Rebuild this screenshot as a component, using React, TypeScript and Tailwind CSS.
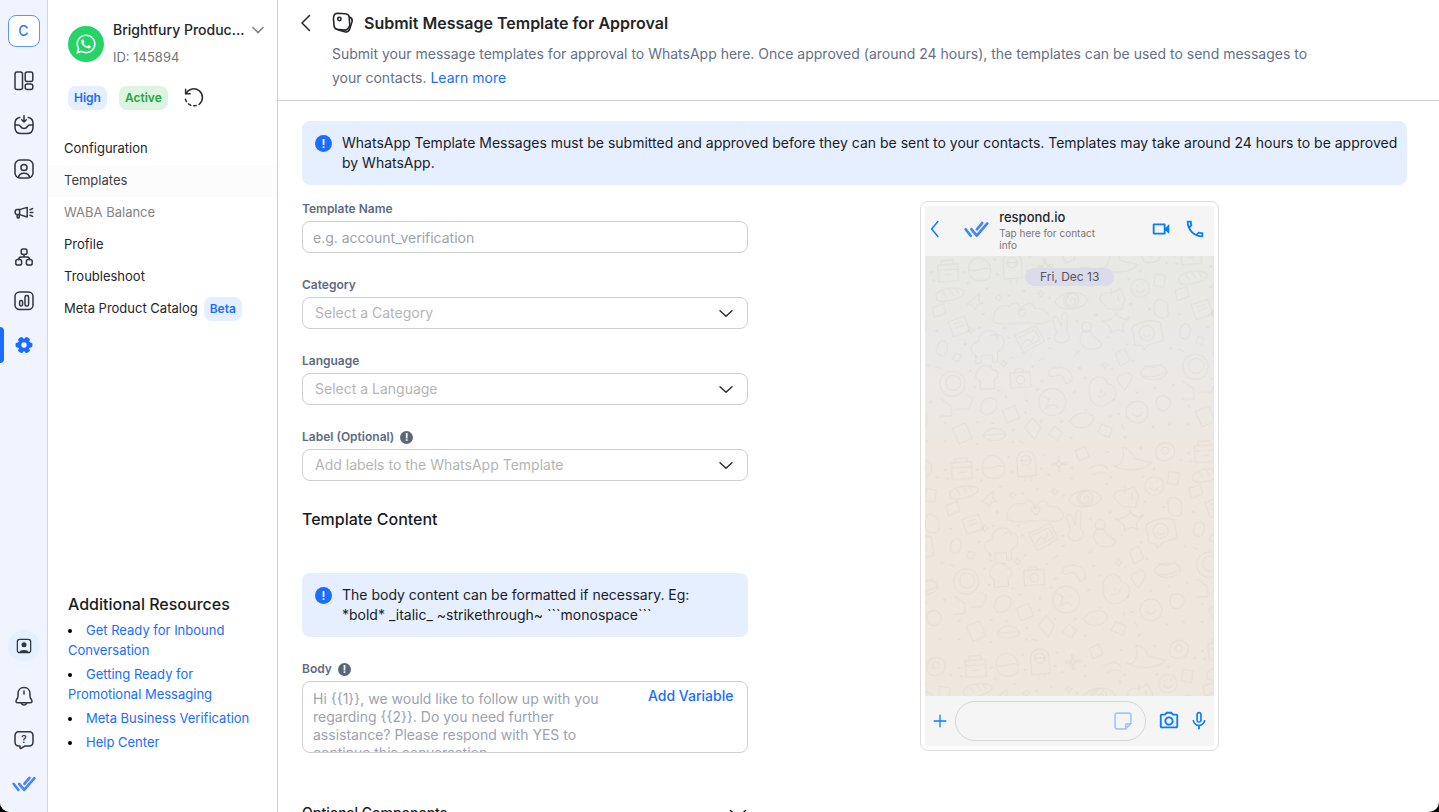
import { useState, type ReactNode } from 'react';
import { FaWhatsapp } from 'react-icons/fa';
import { MdOutlinePhone, MdOutlineVideocam, MdOutlinePhotoCamera, MdMicNone } from 'react-icons/md';

const menuItems = ['Configuration', 'Templates', 'WABA Balance', 'Profile', 'Troubleshoot', 'Meta Product Catalog'];

const resources = [
  'Get Ready for Inbound Conversation',
  'Getting Ready for Promotional Messaging',
  'Meta Business Verification',
  'Help Center',
];

function Icon({ children, className = 'size-6' }: { children: ReactNode; className?: string }) {
  return (
    <svg viewBox="0 0 24 24" className={className} fill="none" stroke="currentColor" strokeWidth="1.5" strokeLinecap="round" strokeLinejoin="round" aria-hidden="true">
      {children}
    </svg>
  );
}

function Logo({ className }: { className: string }) {
  return (
    <svg viewBox="0 0 24 16" className={className} fill="none" stroke="#4285ff" strokeWidth="2.6" strokeLinecap="round" strokeLinejoin="round" aria-hidden="true">
      <path d="M1.6 7.8 6.4 14" />
      <path d="M7.2 7.8 12.2 13.8 22.4 2.2" />
      <path d="M17.4 1.8 12.4 7.8" />
    </svg>
  );
}

const navIcons = [
  {
    label: 'Dashboard',
    icon: (
      <>
        <rect x="3" y="3" width="7.5" height="17.5" rx="2" />
        <rect x="13.2" y="3" width="7.6" height="9.4" rx="2" />
        <rect x="13.2" y="15" width="7.6" height="5.5" rx="2" />
      </>
    ),
  },
  {
    label: 'Inbox',
    icon: (
      <>
        <path d="M12 2.8v6M9.7 6.8 12 9l2.3-2.2" />
        <path d="M7.8 4.4C4.4 5 3 6.8 3 10.2v4C3 19 5 20.6 9.4 20.6h5.2c4.4 0 6.4-1.6 6.4-6.4v-4c0-3.4-1.4-5.2-4.8-5.8" />
        <path d="M3.2 12h3.2c2.6 0 1.6 3.6 5.6 3.6s3-3.6 5.6-3.6h3.2" />
      </>
    ),
  },
  {
    label: 'Contacts',
    icon: (
      <>
        <rect x="3" y="3" width="18" height="18" rx="5" />
        <circle cx="12" cy="10.5" r="3.1" />
        <path d="M6.4 20.4c.4-2.7 2.6-4.2 5.6-4.2s5.2 1.5 5.6 4.2" />
      </>
    ),
  },
  {
    label: 'Broadcasts',
    icon: (
      <>
        <path d="M7.6 8.6H5A1.8 1.8 0 0 0 3.2 10.4v1.4A1.8 1.8 0 0 0 5 13.6h2.6z" />
        <path d="M7.6 8.6 15.2 6.4V16l-7.6-2.4" />
        <path d="M5.2 13.8v2.4c0 1.2 2 1.2 2 0v-2.4" />
        <path d="M18 8.8 20.6 7.6M18.2 11.6h2.6M18 14.2l2.6 1.2" />
      </>
    ),
  },
  {
    label: 'Workflows',
    icon: (
      <>
        <rect x="9.2" y="4" width="5.8" height="5.4" rx="1.8" />
        <rect x="3.8" y="14.6" width="5.8" height="5.4" rx="1.8" />
        <rect x="14.4" y="14.6" width="5.8" height="5.4" rx="1.8" />
        <path d="M12 9.4V12M6.8 14.4c0-1.6.6-2.4 2-2.4h6.6c1.4 0 2 .8 2 2.4" />
      </>
    ),
  },
  {
    label: 'Reports',
    icon: (
      <>
        <rect x="3" y="3" width="18" height="17.5" rx="4.5" />
        <rect x="7.6" y="11.6" width="3" height="5.4" rx="1.4" />
        <rect x="13" y="6.6" width="3.6" height="10.4" rx="1.6" />
      </>
    ),
  },
];

function SettingsIcon() {
  return (
    <svg viewBox="0 0 24 24" className="size-6" aria-hidden="true">
      <g fill="#1a6dff">
        <circle cx="12" cy="12" r="6.4" />
        {[0, 60, 120, 180, 240, 300].map((angle) => (
          <rect key={angle} x="15" y="9.4" width="5.4" height="5.2" rx="1.6" transform={`rotate(${angle} 12 12)`} />
        ))}
      </g>
      <circle cx="12" cy="12" r="2.7" fill="#f0f4ff" />
    </svg>
  );
}

function NavRail() {
  return (
    <nav aria-label="Main" className="flex w-12 shrink-0 flex-col items-center border-r border-[#c2d7ff] bg-[#f0f4ff] pt-[15px] pb-4 text-[#31353d]">
      <button className="mb-4 size-8 rounded-lg border border-[#5b95ff] bg-white text-sm font-medium text-[#2f79ff]">C</button>
      <div className="flex w-full flex-col gap-2">
        {navIcons.map((item) => (
          <button key={item.label} aria-label={item.label} className="flex h-9 items-center justify-center">
            <Icon>{item.icon}</Icon>
          </button>
        ))}
        <button aria-label="Settings" className="relative flex h-9 items-center justify-center">
          <span className="absolute inset-y-0 left-0 w-1 rounded-r bg-[#1a6dff]" />
          <SettingsIcon />
        </button>
      </div>
      <div className="mt-auto flex flex-col items-center gap-5">
        <button aria-label="Account" className="mb-0.5 flex size-8 items-center justify-center rounded-full bg-[#e4efff]">
          <Icon className="size-5">
            <rect x="4" y="4" width="16" height="16" rx="3" />
            <circle cx="12" cy="10.5" r="3" fill="currentColor" stroke="none" />
            <path d="M6.5 19.5c0-3.5 11-3.5 11 0z" fill="currentColor" stroke="none" />
          </Icon>
        </button>
        <button aria-label="Notifications">
          <Icon>
            <path d="M12 3.6c-3.6 0-6 2.6-6 6.2v2.6c0 1.8-2 3-2 5 0 1 .8 1.4 1.8 1.4h12.4c1 0 1.8-.4 1.8-1.4 0-2-2-3.2-2-5V9.8c0-3.6-2.4-6.2-6-6.2z" />
            <path d="M9.4 19.2c.8 2.4 4.4 2.4 5.2 0M12 7v3" />
          </Icon>
        </button>
        <button aria-label="Help">
          <svg viewBox="0 0 24 24" className="size-6" fill="none" stroke="currentColor" strokeWidth="1.5" strokeLinejoin="round" aria-hidden="true">
            <path d="M7 3.8h10c3 0 4 1.6 4 4.2v6c0 2.6-1 4-4 4h-4l-4 2.4c-.6.4-1 0-1-.6V18H7c-3 0-4-1.4-4-4V8c0-2.6 1-4.2 4-4.2z" />
            <text x="12" y="14.5" textAnchor="middle" fontSize="10" fontWeight="600" fill="currentColor" stroke="none">?</text>
          </svg>
        </button>
        <a href="#home" aria-label="Home" className="flex h-6 items-center">
          <Logo className="h-4 w-6" />
        </a>
      </div>
    </nav>
  );
}

function Sidebar() {
  return (
    <aside className="flex w-[230px] shrink-0 flex-col border-r border-[#cfcfcf] bg-white pb-[60px]">
      <div className="flex items-center pt-[18px] pr-3 pl-5">
        <span className="flex size-9 shrink-0 items-center justify-center rounded-full bg-[#25d366] text-white">
          <FaWhatsapp className="size-[22px]" />
        </span>
        <div className="ml-[9px] min-w-0 flex-1">
          <button className="flex w-full items-center justify-between text-sm leading-6 font-medium whitespace-nowrap text-[#232629]">
            Brightfury Produc...
            <Icon className="size-3.5 shrink-0 text-[#8a8a8a]">
              <path d="m3.5 8 8.5 8.5L20.5 8" strokeWidth="2.8" />
            </Icon>
          </button>
          <p className="mt-[3px] text-[13px] leading-6 text-[#757575]">ID: 145894</p>
        </div>
      </div>

      <div className="mt-[17px] flex items-center pl-5 text-xs leading-6 font-semibold">
        <span className="rounded-lg bg-[#e5efff] px-1.5 text-[#1a6dff]">High</span>
        <span className="ml-3 rounded-lg bg-[#dcf5e0] px-1.5 text-[#27a343]">Active</span>
        <button aria-label="Refresh status" className="ml-3.5 text-[#2c2f36]">
          <Icon>
            <path d="M3.6 3.2v4.600h4.600" />
            <path d="M4 7.600A8.700 8.700 0 1 1 17 18.500" />
            <path d="M14.200 19.500a8.700 8.700 0 0 1-11-8.500" strokeDasharray="2.600 2.900" />
          </Icon>
        </button>
      </div>

      <ul className="mt-[23px] text-[13px] text-[#232629]">
        {menuItems.map((item) => (
          <li key={item}>
            <a
              href="#"
              className={`flex h-8 items-center gap-1.5 pl-4 ${item === 'Templates' ? 'bg-[#fcfcfc] text-[#3c3f42]' : ''} ${item === 'WABA Balance' ? 'text-[#838383]' : ''}`}
            >
              {item}
              {item === 'Meta Product Catalog' && (
                <span className="rounded-lg bg-[#e5efff] px-1.5 text-xs leading-6 font-semibold text-[#1a6dff]">Beta</span>
              )}
            </a>
          </li>
        ))}
      </ul>

      <div className="mt-auto pr-6 pl-5">
        <h2 className="mb-1 text-base leading-6 font-medium text-[#191c1f]">Additional Resources</h2>
        <ul className="flex list-inside list-disc flex-col gap-1 text-[13px] leading-5 text-black">
          {resources.map((item) => (
            <li key={item}>
              <a href="#" className="text-[#1a6dff]">{item}</a>
            </li>
          ))}
        </ul>
      </div>
    </aside>
  );
}

function Alert({ children }: { children: ReactNode }) {
  return (
    <div className="flex gap-2.5 rounded-lg bg-[#e5efff] py-3 pr-1 pl-[13px] text-sm text-[#191c1f]">
      <span className="mt-0.5 flex size-[17px] shrink-0 items-center justify-center rounded-full bg-[#1a6dff] text-xs font-semibold text-white">!</span>
      <p>{children}</p>
    </div>
  );
}

function Label({ id, children, info }: { id: string; children: string; info?: boolean }) {
  return (
    <div className="mb-1 flex h-4 items-center gap-1.5">
      <label htmlFor={id} className="text-xs font-semibold text-[#5d6b82]">{children}</label>
      {info && (
        <span className="flex size-[13px] items-center justify-center rounded-full bg-[#5b6678] text-[10px] font-bold text-white">!</span>
      )}
    </div>
  );
}

function SelectField({ id, label, placeholder, options, info }: { id: string; label: string; placeholder: string; options: string[]; info?: boolean }) {
  const [value, setValue] = useState('');

  return (
    <div className="mb-6">
      <Label id={id} info={info}>{label}</Label>
      <div className="relative">
        <select
          id={id}
          value={value}
          onChange={(e) => setValue(e.target.value)}
          className={`h-8 w-full appearance-none rounded-lg border border-[#cfcfcf] bg-white pr-10 pl-3 text-sm ${value ? 'text-[#191c1f]' : 'text-[#b5b5b5]'}`}
        >
          <option value="" disabled>{placeholder}</option>
          {options.map((option) => (
            <option key={option}>{option}</option>
          ))}
        </select>
        <Icon className="pointer-events-none absolute top-2 right-3.5 size-4 text-[#232629]">
          <path d="m3 8.5 9 8.5 9-8.500" strokeWidth="2" />
        </Icon>
      </div>
    </div>
  );
}

function Doodles() {
  return (
    <svg className="absolute inset-0 size-full" fill="none" stroke="#8b8b7c" strokeOpacity="0.1" strokeWidth="1.3" strokeLinecap="round" strokeLinejoin="round" aria-hidden="true">
      <defs>
        <pattern id="doodles" width="290" height="236" patternUnits="userSpaceOnUse" patternTransform="rotate(-4) scale(0.84)">
          <path d="M14 12h24v20H14zM14 18h24M19 12V7h14v5M22 24h8" />
          <path d="M54 10c12-9 26 2 22 18-2 8-20 8-24 0-2-6-2-14 2-18zM52 20c8 5 16-4 25 1" />
          <path d="M92 34V14c0-13 22-13 22 0v20zM98 15h11M100 34v6M107 34v6" />
          <circle cx="103" cy="15" r="6" />
          <circle cx="142" cy="22" r="3" />
          <path d="M142 19c-5-8 5-8 0 0M145 22c8-5 8 5 0 0M142 25c5 8-5 8 0 0M139 22c-8 5-8-5 0 0" />
          <path d="M162 8l12-5 4 13-12 4zM178 30c8-6 18-4 21 2M181 38c5-3 11-3 17-1" />
          <path d="M206 28c8 6 16-10 12-20 8 0 12 7 14 14l20 6c-8 9-34 10-46 0z" />
          <path d="M262 8c8-6 20 0 18 10s-18 12-22 3c-1-5 0-9 4-13z" />
          <circle cx="269" cy="15" r="4" />
          <path d="M10 46c10-8 28-7 34-1 0 8-26 14-34 8zM18 44l4 7M26 42l4 7M34 42l3 6" />
          <path d="M55 54l7-5-2 8 5 4-7 1-3 6-3-6-6-1 5-4zM84 52l4 3-3 4-5-3z" />
          <path d="M76 84c-2-13 10-22 20-17 6-9 16-1 12 7 7-12 17-12 18-2 10-2 20 7 16 15-10 8-24-2-31 1-10-2-24 3-35-4zM109 80c-8-8 0-12 2-7 2-5 9 0 0 7z" />
          <path d="M150 66c10-14 32-14 40 0-10 13-32 12-40 0z" />
          <circle cx="170" cy="65" r="9" />
          <path d="M170 57c-5 3-7 7-6 11 4 6 12 2 11-3-1-4-6-3-6 1" />
          <path d="M204 66c0-6 8-9 13-6l12-5 5 12-5 13-16-2zM218 54v8M226 62v8" />
          <circle cx="253" cy="56" r="11" />
          <path d="M248 58c3 5 8 4 10 0M249 52v1M257 51v1M272 40l12 3-3 14-12-3z" />
          <path d="M22 80l20-5 5 18-20 5zM28 83l10-2M30 88l10-3M4 62l14-4 2 12-14 4z" />
          <path d="M56 106c2-14 18-16 24-6 10 0 8 18-2 20v12h-6v-9H58v9h-6v-10c-6-2-7-12-1-14zM71 101c4-4 8-2 8 3" />
          <path d="M100 102l26-10 9 19-26 12zM104 105l20-8 6 12-20 8M108 114l6-7 5 4 4-7" />
          <path d="M150 102l-4-16c2-5 6-4 7 0l3 10 2-15c3-4 6-1 6 2l-2 18c7 8-2 16-10 13-6-2-7-8-2-12z" />
          <path d="M178 116c-4-9 8-22 14-8 4 7 10 6 11 12-6 7-22 6-25-4z" />
          <circle cx="186" cy="98" r="6" />
          <path d="M204 92c8 2 17-3 18-9 2 7 8 9 14 9-8 4-8 10-6 15-6-6-11-4-16 0 2-6-2-12-10-15z" />
          <path d="M240 102c9-7 24-8 34-4l2 22-18 4-6 6-1-5-9-2z" />
          <circle cx="257" cy="110" r="9" />
          <path d="M253 112c2 4 6 3 8 0M268 76c6-10 18-2 16 8 2 14-12 10-16 4z" />
          <path d="M8 106c6-9 14-1 10 8-2 10-14 6-12-3zM28 118l7 3-4 7-7-3z" />
          <circle cx="22" cy="154" r="15" />
          <circle cx="23" cy="153" r="9" />
          <path d="M6 170l12 10v12H4M38 168l7 5-6 12H24M54 140c2-6 14-8 17 1 7 0 8 9 1 12v10H55v-10c-6-2-6-10-1-13z" />
          <path d="M91 146h24v18H91zM96 146l2-4h8l2 4" />
          <circle cx="103" cy="155" r="5" />
          <path d="M138 146c13-7 28 0 26 14l-7 4-4-10c-6-6-10 4-16-2zM128 176l8 4-6 12" />
          <circle cx="139" cy="184" r="16" />
          <path d="M134 180v1M144 180v1M133 191c3-5 9-5 12 0" />
          <path d="M184 174c-2-18 20-22 22-7 13 2 11 20 0 23-8 7-24 2-22-16zM198 174v3M193 181c5 3 11-2 11-5" />
          <path d="M218 132l11-6 6 15-12 6zM224 158c6-6 16 0 9 8l-7 10-7-10c-3-5 2-9 5-8z" />
          <path d="M246 156c9-11 30-9 32 2-5 10-27 12-32-2zM251 148c9 5 15 4 22 0M250 161c10 3 20 0 27-4" />
          <path d="M56 178c8-8 20-3 17 6-2 10-19 14-20 2zM79 190l15-5 5 15-15 5zM158 208c8-10 25-12 29-1-4 13-23 13-29 1z" />
          <circle cx="239" cy="203" r="13" />
          <path d="M233 204c4 6 10 5 12-1M235 198v1M243 198v1M18 207l16-5 7 18-16 6zM54 218c8-12 26-9 27 3M55 218h25c4 9-26 9-25 0z" />
          <path d="M104 212l10-11 9 12-8 14zM132 222l8-9 9 8-7 9zM190 224l6-10 12 6-4 11zM264 188c9-6 20 3 13 12s-19 0-13-12z" />
          <path d="M48 88l2 3 3 1-3 2-2 3-1-3-3-2 3-1zM134 50l2 3 3 1-3 2-2 3-1-3-3-2 3-1zM204 140l2 3 3 1-3 2-2 3-1-3-3-2 3-1zM84 130l2 3 3 1-3 2-2 3-1-3-3-2 3-1zM4 132l5 3M170 130l5-4M126 134l7-3M219 216l3 6M96 228l6 2" />
          <g strokeWidth="2.6">
            <path d="M48 36h1M82 10h1M124 10h1M128 34h1M155 40h1M202 42h1M240 44h1M64 74h1M7 90h1M52 124h1M88 92h1M94 128h1M140 120h1M174 90h1M198 84h1M232 122h1M284 130h1M44 140h1M76 166h1M84 174h1M118 140h1M122 168h1M174 146h1M180 158h1M212 150h1M238 142h1M240 180h1M284 174h1M10 200h1M48 202h1M90 214h1M124 206h1M148 208h1M216 204h1M222 232h1M276 220h1M158 228h1" />
            <path d="M6 20h1M8 30h1M44 22h1M84 28h1M120 26h1M156 28h1M200 12h1M240 10h1M254 36h1M286 28h1M70 44h1M96 54h1M114 50h1M144 60h1M196 50h1M240 74h1M262 82h1M58 90h1M92 104h1M140 108h1M210 112h1M236 90h1M40 108h1M68 136h1M128 158h1M166 174h1M212 186h1M262 176h1M48 160h1M108 180h1M106 194h1M8 222h1M46 228h1M178 196h1M256 222h1M206 206h1M66 204h1M88 228h1" />
          </g>
        </pattern>
      </defs>
      <rect width="100%" height="100%" fill="url(#doodles)" stroke="none" />
    </svg>
  );
}

function ChatPreview() {
  return (
    <div className="w-[299px] rounded-lg border border-[#dedede] bg-white p-1">
      <div className="flex h-[50px] items-center bg-[#f5f5f5] pr-2 pb-1">
        <button aria-label="Back" className="text-[#0a7cff]">
          <Icon className="size-5">
            <path d="M15.5 3 8 12l7.5 9" strokeWidth="1.8" />
          </Icon>
        </button>
        <Logo className="ml-[19px] h-[17px] w-[25px] shrink-0" />
        <div className="ml-2.5 w-[110px]">
          <p className="text-[13px] leading-5 font-medium text-[#232629]">respond.io</p>
          <p className="text-[10px] leading-3 text-[#777]">Tap here for contact info</p>
        </div>
        <div className="ml-auto flex items-center gap-3 text-[#0a7cff]">
          <button aria-label="Video call"><MdOutlineVideocam className="size-[22px]" /></button>
          <button aria-label="Call"><MdOutlinePhone className="size-[22px]" /></button>
        </div>
      </div>
      <div className="relative flex h-[440px] justify-center bg-linear-to-b from-[#e8e8e4] via-[#ebe9e7] via-25% to-[#eee7de] to-50% pt-3">
        <Doodles />
        <span className="relative h-[18px] rounded-full bg-[#dcdbe9] px-[15px] text-xs leading-[18px] text-[#55565c]">Fri, Dec 13</span>
      </div>
      <div className="flex h-[50px] items-center bg-[#f5f5f5] pr-1 pl-2 text-[#0a7cff]">
        <button aria-label="Attach" className="mr-2">
          <Icon className="size-3.5">
            <path d="M12 2v20M2 12h20" strokeWidth="2.2" />
          </Icon>
        </button>
        <div className="flex h-10 min-w-0 flex-1 items-center rounded-full border border-[#d8d8d8] pr-3">
          <input aria-label="Message" className="min-w-0 flex-1 bg-transparent pl-4 text-sm outline-none" />
          <button aria-label="Stickers" className="text-[#a3c6ff]">
            <Icon className="size-5">
              <path d="M21.5 15V5a2.5 2.5 0 0 0-2.5-2.5H5A2.5 2.5 0 0 0 2.5 5v14A2.5 2.5 0 0 0 5 21.5h10z" strokeWidth="2" />
              <path d="M21.5 15H17a2 2 0 0 0-2 2v4.5z" fill="currentColor" fillOpacity="0.6" />
            </Icon>
          </button>
        </div>
        <button aria-label="Camera" className="ml-3"><MdOutlinePhotoCamera className="size-[22px]" /></button>
        <button aria-label="Record" className="ml-2"><MdMicNone className="size-[22px]" /></button>
      </div>
    </div>
  );
}

export default function App() {
  const [name, setName] = useState('');
  const [body, setBody] = useState('');

  return (
    <div className="h-screen bg-black font-['Inter',sans-serif]">
      <div className="flex h-full overflow-hidden rounded-b-[10px] bg-white">
        <NavRail />
        <Sidebar />

        <main className="flex min-w-0 flex-1 flex-col">
          <header className="flex shrink-0 items-start border-b border-[#cfcfcf] pt-[11px] pr-[120px] pb-2.5 pl-[18px]">
            <button aria-label="Back" className="mr-3 text-[#232629]">
              <Icon>
                <path d="M13.5 4.5 6 12l7.5 7.5" />
              </Icon>
            </button>
            <div>
              <div className="flex items-center gap-2 text-[#232629]">
                <Icon>
                  <g transform="translate(-1.5 -0.8) scale(1.06)">
                    <path d="M6.5 2.8 14 3.4c2 .2 3.4 1.2 3.6 3l.6 7.6c0 1.4-2 4.2-4 4.8l-6.8-.6c-2.4-.2-3.6-1.2-4-3L2.8 8.4c-.2-3 1-5.4 3.7-5.6z" />
                    <path d="M18 6.4c1.8.8 2.8 2 2.4 4l-2.2 7.2c-.8 2.4-2.6 3.4-4.8 2.8l-6-1.8" />
                    <circle cx="8.4" cy="8.2" r="1.6" />
                  </g>
                </Icon>
                <h1 className="text-base leading-6 font-semibold">Submit Message Template for Approval</h1>
              </div>
              <p className="mt-[7px] text-sm leading-6 text-[#657084]">
                Submit your message templates for approval to WhatsApp here. Once approved (around 24 hours), the templates can be used to send messages to your contacts.{' '}
                <a href="#" className="text-[#1a6dff]">Learn more</a>
              </p>
            </div>
          </header>

          <div className="min-h-0 flex-1 overflow-y-auto pt-5 pr-8 pl-6 [scrollbar-width:none]">
            <Alert>
              WhatsApp Template Messages must be submitted and approved before they can be sent to your contacts. Templates may take around 24 hours to be approved by WhatsApp.
            </Alert>

            <div className="mt-4 flex">
              <form className="w-[40.4%] shrink-0" onSubmit={(e) => e.preventDefault()}>
                <div className="mb-6">
                  <Label id="templateName">Template Name</Label>
                  <input
                    id="templateName"
                    type="text"
                    placeholder="e.g. account_verification"
                    value={name}
                    onChange={(e) => setName(e.target.value)}
                    className="block h-8 w-full rounded-lg border border-[#cfcfcf] px-2.5 text-sm text-[#191c1f] placeholder:text-[#9ca3ae]"
                  />
                </div>
                <SelectField id="category" label="Category" placeholder="Select a Category" options={['Marketing', 'Utility', 'Authentication']} />
                <SelectField id="language" label="Language" placeholder="Select a Language" options={['English', 'Spanish', 'Malay']} />
                <SelectField id="label" label="Label (Optional)" placeholder="Add labels to the WhatsApp Template" options={['Promotion', 'Support']} info />

                <h2 className="mb-10 text-base leading-7 font-medium text-[#191c1f]">Template Content</h2>

                <Alert>
                  The body content can be formatted if necessary. Eg:
                  <br />
                  *bold* _italic_ ~strikethrough~ ```monospace```
                </Alert>

                <div className="mt-6 mb-12">
                  <Label id="body" info>Body</Label>
                  <div className="flex items-start overflow-hidden rounded-lg border border-[#cfcfcf]">
                    <textarea
                      id="body"
                      placeholder="Hi {{1}}, we would like to follow up with you regarding {{2}}. Do you need further assistance? Please respond with YES to continue this conversation."
                      value={body}
                      onChange={(e) => setBody(e.target.value)}
                      className="h-[70px] min-w-0 flex-1 resize-none overflow-hidden pt-2 pr-4 pl-2.5 text-sm leading-[18px] text-[#191c1f] outline-none placeholder:text-[#9ca3ae]"
                    />
                    <button type="button" onClick={() => setBody(body + '{{1}}')} className="px-3.5 pt-1 text-sm font-medium text-[#1a6dff]">
                      Add Variable
                    </button>
                  </div>
                </div>

                <button type="button" className="flex w-full items-center justify-between pb-6 text-sm leading-6 font-medium text-[#191c1f]">
                  Optional Components
                  <Icon className="size-5">
                    <path d="m3 9 9 8.5L21 9" strokeWidth="1.8" />
                  </Icon>
                </button>
              </form>

              <div className="flex flex-1 items-start justify-center pr-4">
                <ChatPreview />
              </div>
            </div>
          </div>
        </main>
      </div>
    </div>
  );
}
